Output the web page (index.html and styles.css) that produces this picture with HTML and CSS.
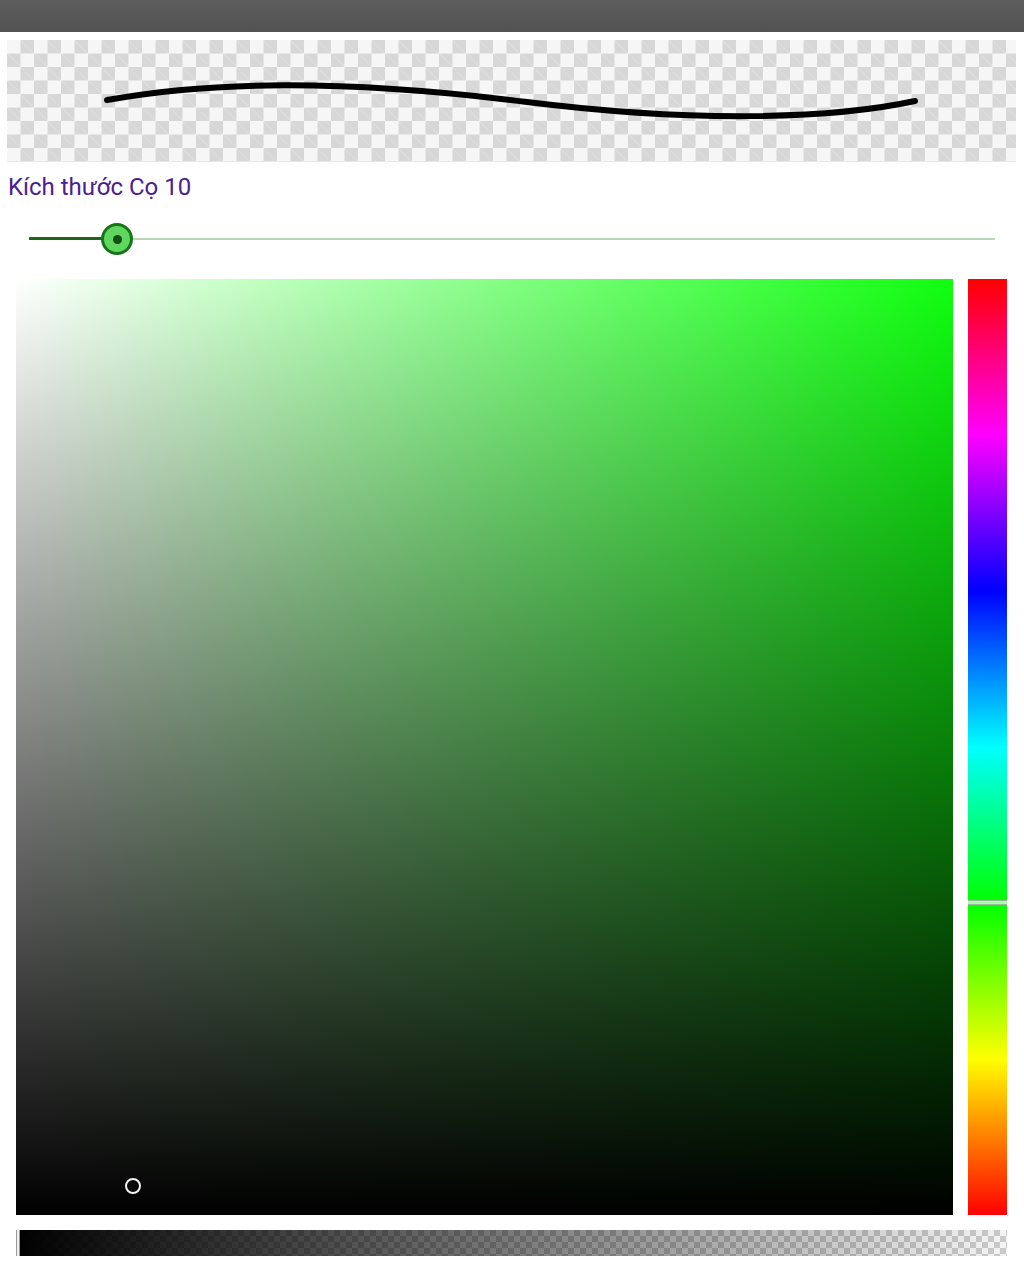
FILE: index.html
```html
<!DOCTYPE html>
<html lang="vi">
<head>
<meta charset="utf-8">
<title>Brush</title>
<link rel="stylesheet" href="styles.css">
</head>
<body>
<div class="topbar"></div>
<div class="preview">
  <svg class="stroke" viewBox="0 0 1009 122" width="1009" height="122">
    <path d="M100 60 C 200 42, 330 38, 520 62 C 680 82, 820 80, 908 61" fill="none" stroke="#000" stroke-width="6" stroke-linecap="round"/>
  </svg>
</div>
<div class="label">Kích thước Cọ 10</div>
<div class="slider">
  <div class="track">
    <div class="track-active"></div>
    <div class="thumb"><div class="thumb-dot"></div></div>
  </div>
</div>
<div class="picker">
  <div class="sv">
    <div class="sv-marker"></div>
  </div>
  <div class="hue">
    <div class="hue-marker"></div>
  </div>
</div>
<div class="alpha">
  <div class="alpha-fill"></div>
  <div class="alpha-marker"></div>
</div>
</body>
</html>
```

FILE: styles.css
```css
html, body {
  margin: 0;
  padding: 0;
  background: #fff;
  font-family: Roboto, "Noto Sans", sans-serif;
}
body {
  width: 1024px;
  height: 1280px;
  overflow: hidden;
}
.topbar {
  height: 32px;
  background: linear-gradient(to bottom, #5d5d5d, #525252);
}
.preview {
  margin: 8px 0 0 7px;
  width: 1009px;
  height: 122px;
  background-color: #f6f6f6;
  background-image:
    linear-gradient(45deg, #d7d7d7 25%, transparent 25%, transparent 75%, #d7d7d7 75%),
    linear-gradient(45deg, #d7d7d7 25%, transparent 25%, transparent 75%, #d7d7d7 75%);
  background-size: 27px 27px;
  background-position: 0 0, 13.5px 13.5px;
}
.stroke {
  display: block;
}
.label {
  margin: 11px 0 0 8px;
  font-size: 24px;
  line-height: 28px;
  color: #4b2090;
}
.slider {
  height: 60px;
  display: flex;
  align-items: center;
  padding: 0 29px;
  margin-top: 8px;
}
.track {
  position: relative;
  flex: 1;
  height: 2px;
  background: #b7d6b7;
}
.track-active {
  position: absolute;
  left: 0;
  top: -1px;
  width: 88px;
  height: 3px;
  background: #1d661d;
}
.thumb {
  position: absolute;
  left: 72px;
  top: -15px;
  width: 26px;
  height: 26px;
  border: 3px solid #167516;
  border-radius: 50%;
  background: #5fd65f;
  display: flex;
  align-items: center;
  justify-content: center;
}
.thumb-dot {
  width: 9px;
  height: 9px;
  border-radius: 50%;
  background: #124f12;
}
.picker {
  display: flex;
  gap: 15px;
  margin: 10px 0 0 16px;
  height: 936px;
}
.sv {
  position: relative;
  width: 937px;
  height: 936px;
  background:
    linear-gradient(to top, #000, rgba(0,0,0,0)),
    linear-gradient(to right, #fff, #10ff10);
}
.sv-marker {
  position: absolute;
  left: 109px;
  top: 899px;
  width: 12px;
  height: 12px;
  border: 2px solid #f2f2f2;
  border-radius: 50%;
}
.hue {
  position: relative;
  width: 39px;
  height: 936px;
  background: linear-gradient(to bottom,
    #ff0000 0%, #ff00ff 16.667%, #0000ff 33.333%, #00ffff 50%,
    #00ff00 66.667%, #ffff00 83.333%, #ff0000 100%);
}
.hue-marker {
  position: absolute;
  left: 0;
  right: 0;
  top: 621px;
  height: 3px;
  border-top: 1px solid #9fb59f;
  border-bottom: 1px solid #9fb59f;
  background: rgba(235,255,235,0.7);
}
.alpha {
  position: relative;
  margin: 15px 0 0 16px;
  width: 991px;
  height: 26px;
  background-color: #f4f4f4;
  background-image:
    linear-gradient(45deg, #cacaca 25%, transparent 25%, transparent 75%, #cacaca 75%),
    linear-gradient(45deg, #cacaca 25%, transparent 25%, transparent 75%, #cacaca 75%);
  background-size: 12px 12px;
  background-position: 0 0, 6px 6px;
}
.alpha-fill {
  position: absolute;
  inset: 0;
  background: linear-gradient(to right, #000, rgba(0,0,0,0));
}
.alpha-marker {
  position: absolute;
  left: 0;
  top: 0;
  width: 2px;
  height: 26px;
  background: #f0f0f0;
  border-left: 1px solid #999;
  border-right: 1px solid #999;
}
```
